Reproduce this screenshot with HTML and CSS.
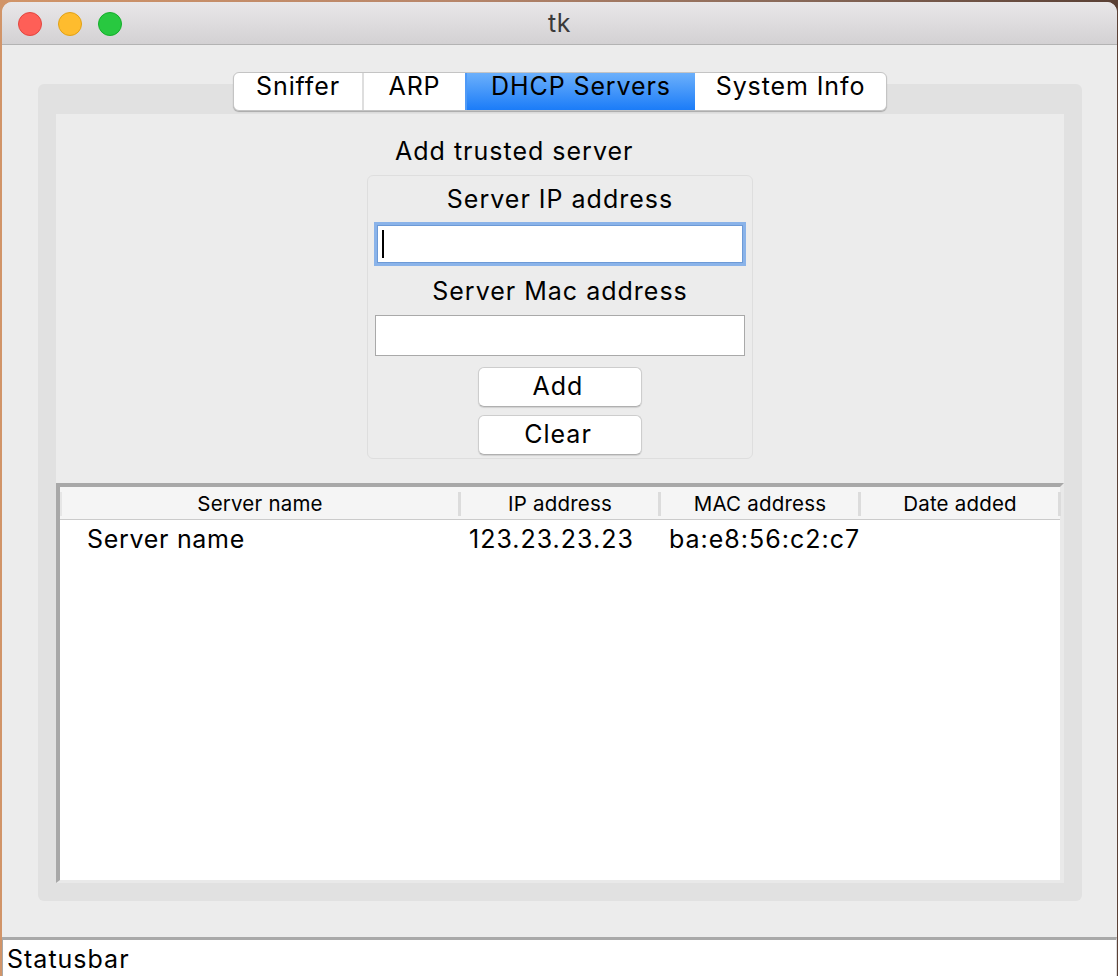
FILE: index.html
```html
<!DOCTYPE html>
<html>
<head>
<meta charset="utf-8">
<title>tk</title>
<link rel="stylesheet" href="styles.css">
</head>
<body>
<div class="window">
  <div class="titlebar">
    <div class="lights">
      <span class="light red"></span>
      <span class="light yellow"></span>
      <span class="light green"></span>
    </div>
    <div class="title">tk</div>
    <div></div>
  </div>
  <div class="main">
    <div class="notebook">
      <div class="tabs">
        <div class="tab tab-sniffer">Sniffer</div>
        <div class="tab tab-arp">ARP</div>
        <div class="tab tab-dhcp selected">DHCP Servers</div>
        <div class="tab tab-sys">System Info</div>
      </div>
      <div class="frame">
        <div class="pane">
          <div class="group">
            <div class="group-label">Add trusted server</div>
            <div class="group-box">
              <div class="field-label">Server IP address</div>
              <div class="entry entry-focused"><span class="caret"></span></div>
              <div class="field-label field-label-2">Server Mac address</div>
              <div class="entry entry-plain"></div>
              <div class="button button-add">Add</div>
              <div class="button button-clear">Clear</div>
            </div>
          </div>
          <div class="table">
            <div class="thead">
              <div class="th th-first">Server name</div>
              <div class="th">IP address</div>
              <div class="th">MAC address</div>
              <div class="th">Date added</div>
            </div>
            <div class="tr">
              <div class="td td-name">Server name</div>
              <div class="td">123.23.23.23</div>
              <div class="td">ba:e8:56:c2:c7</div>
              <div class="td"></div>
            </div>
          </div>
        </div>
      </div>
    </div>
  </div>
  <div class="statusbar">Statusbar</div>
</div>
</body>
</html>
```

FILE: styles.css
```css
* { box-sizing: border-box; }
html, body { margin: 0; padding: 0; }
body {
  width: 1118px;
  height: 976px;
  overflow: hidden;
  background: linear-gradient(90deg, #d19468 0%, #b8866a 40%, #8a6a5a 70%, #5a4035 100%);
  font-family: "Inter", "Liberation Sans", sans-serif;
  color: #000;
  padding: 2px 1px 0 2px;
}
.window {
  width: 1115px;
  height: 974px;
  background: #ececec;
  border-radius: 10px 10px 0 0;
  overflow: hidden;
  display: flex;
  flex-direction: column;
}
.titlebar {
  height: 43px;
  flex: none;
  background: linear-gradient(#e9e7e9, #d3d1d3);
  border-bottom: 1px solid #b3b3b3;
  display: grid;
  grid-template-columns: 1fr auto 1fr;
  align-items: center;
}
.lights { display: flex; gap: 16px; padding-left: 16px; padding-top: 1px; }
.light { width: 24px; height: 24px; border-radius: 50%; display: block; }
.red { background: #fe5f57; border: 1px solid #e2463f; }
.yellow { background: #febc2e; border: 1px solid #e1a116; }
.green { background: #28c840; border: 1px solid #14ae2a; }
.title { font-size: 25px; color: #3a3a3a; line-height: 43px; letter-spacing: 0.5px; }

.main {
  flex: 1;
  display: flex;
  padding: 27px 35px 36px 36px;
}
.notebook { flex: 1; display: flex; flex-direction: column; }
.tabs {
  position: relative;
  z-index: 1;
  align-self: center;
  display: flex;
  height: 39px;
  margin-bottom: -27px;
  background: #fff;
  border: 1px solid #c4c4c4;
  border-radius: 6px;
  box-shadow: 0 1px 1px rgba(0,0,0,0.25);
  font-size: 25px;
  letter-spacing: 0.9px;
}
.tab {
  line-height: 26px;
  padding-bottom: 10px;
  text-align: center;
  border-left: 2px solid #dedede;
}
.tab-sniffer { width: 128px; border-left: none; border-radius: 5px 0 0 5px; }
.tab-arp { width: 103px; }
.tab-dhcp { width: 230px; }
.tab-sys { width: 191px; border-left: none; border-radius: 0 5px 5px 0; }
.tab.selected {
  background: linear-gradient(#6cb0fb, #1b7cf8);
  border-left-color: #4f9af7;
}

.frame {
  flex: 1;
  display: flex;
  background: #e1e1e1;
  border-radius: 6px;
  padding: 30px 18px 18px 18px;
}
.pane {
  flex: 1;
  display: flex;
  flex-direction: column;
  background: #ececec;
}
.group {
  align-self: center;
  width: 386px;
  margin-top: 22px;
  display: flex;
  flex-direction: column;
}
.group-label {
  font-size: 25px;
  line-height: 30px;
  padding-left: 28px;
  letter-spacing: 1px;
}
.group-box {
  margin-top: 9px;
  border: 1px solid #dedede;
  border-radius: 6px;
  padding: 8px 0 3px;
  display: flex;
  flex-direction: column;
  align-items: center;
}
.field-label { font-size: 25px; line-height: 30px; letter-spacing: 1px; }
.field-label-2 { margin-top: 10px; }
.entry { background: #fff; }
.entry-focused {
  margin-top: 8px;
  width: 372px;
  height: 44px;
  border: 3px solid #8ab3e9;
  box-shadow: inset 0 0 0 1px #6d9ad6;
  padding: 5px 4px;
  display: flex;
}
.caret { width: 2px; height: 28px; background: #000; margin-left: 1px; }
.entry-plain {
  margin-top: 9px;
  width: 370px;
  height: 41px;
  border: 1px solid #a9a9a9;
}
.button {
  width: 164px;
  height: 40px;
  background: #fff;
  border: 1px solid #cdcdcd;
  border-bottom-color: #b0b0b0;
  border-radius: 6px;
  box-shadow: 0 1px 1px rgba(0,0,0,0.12);
  font-size: 25px;
  line-height: 37px;
  text-align: center;
  letter-spacing: 1px;
  padding-right: 4px;
}
.button-add { margin-top: 11px; }
.button-clear { margin-top: 8px; }

.table {
  flex: 1;
  margin-top: 24px;
  background: #fff;
  border-style: solid;
  border-width: 4px 4px 3px 4px;
  border-color: #a8a8a8 #e9e9e9 #e9e9e9 #a8a8a8;
}
.thead {
  display: grid;
  grid-template-columns: 400px 200px 200px 200px;
  height: 33px;
  background: #f5f5f5;
  border-bottom: 1px solid #cbcbcb;
}
.th {
  position: relative;
  font-size: 20.5px;
  line-height: 34px;
  text-align: center;
  letter-spacing: 0.2px;
}
.th::after {
  content: "";
  position: absolute;
  right: -1px;
  top: 5px;
  bottom: 5px;
  width: 3px;
  background: #dcdcdc;
}
.th-first::before {
  content: "";
  position: absolute;
  left: 0;
  top: 5px;
  bottom: 5px;
  width: 2px;
  background: #e6e6e6;
}
.tr {
  display: grid;
  grid-template-columns: 400px 200px 200px 200px;
  height: 38px;
}
.td {
  font-size: 25px;
  line-height: 38px;
  padding-left: 9px;
  white-space: nowrap;
  letter-spacing: 1px;
}
.td-name { padding-left: 27px; letter-spacing: 0.7px; }

.statusbar {
  flex: none;
  height: 39px;
  background: #fff;
  border-top: 3px solid #a9a9a9;
  border-left: 1px solid #a9a9a9;
  border-right: 1px solid #dddddd;
  font-size: 25px;
  line-height: 38px;
  padding-left: 4px;
  letter-spacing: 1px;
}
```
